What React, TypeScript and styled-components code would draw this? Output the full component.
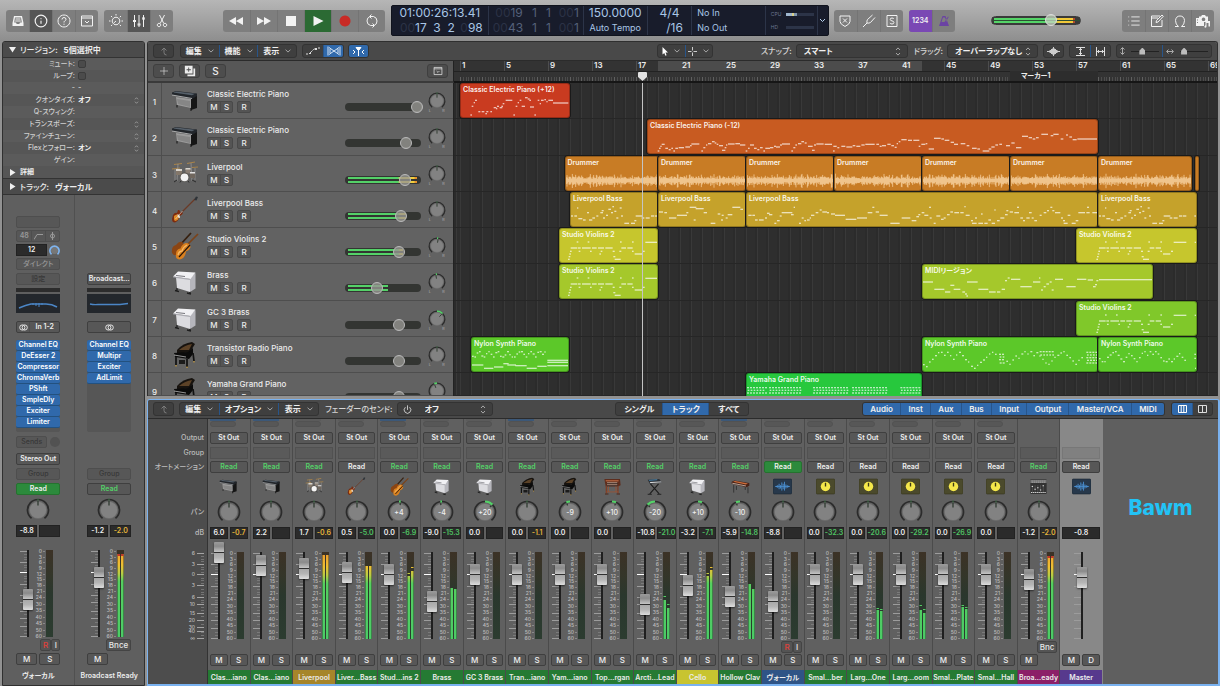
import React from "react";
import styled, { createGlobalStyle, css } from "styled-components";
import { Info, List, Power } from "lucide-react";

const BAR = 11;
const green = "#54d168";
const blue = "#3069ab";

const Global = createGlobalStyle`
  * { box-sizing: border-box; }
  body {
    margin: 0;
    background: #929292;
    color: #ececec;
    font: 500 8px/10px Inter, "Noto Sans CJK JP", sans-serif;
    font-feature-settings: "palt";
  }
  button, input, select { font: inherit; font-feature-settings: inherit; color: inherit; margin: 0; }
  button { padding: 0; border: 0; background: none; cursor: pointer; }
  svg { display: block; flex: none; }
`;

/* ---------- page frame ---------- */

const Page = styled.div`
  display: flex;
  flex-direction: column;
  height: 100vh;
  min-height: 600px;
  overflow: hidden;
`;

const Body = styled.div`
  flex: 1;
  min-height: 0;
  display: grid;
  grid-template-columns: 143px minmax(0, 1fr);
  gap: 2px;
  padding-left: 2px;
`;

const MainColumn = styled.main`
  display: flex;
  flex-direction: column;
  gap: 3px;
  min-width: 0;
  min-height: 0;
`;

const Spacer = styled.div<{ $grow?: number }>`
  flex: ${(p) => p.$grow ?? 1} 1 0;
`;

/* ---------- control bar ---------- */

const ControlBar = styled.header`
  height: 41px;
  flex: none;
  display: flex;
  align-items: center;
  padding: 0 6px;
  background: linear-gradient(#b6b6b6, #8e8e8e);
`;

const BarGroup = styled.div<{ $gap?: number }>`
  display: flex;
  height: 22px;
  margin-left: ${(p) => p.$gap ?? 0}px;
  border-radius: 3px;
  overflow: hidden;
  background: #7e7e7e;
`;

const barTones = { plain: "transparent", on: "#565656", play: "#2b6a33", violet: "#7a48b4" };

const BarButton = styled.button<{ $tone?: keyof typeof barTones; $wide?: boolean }>`
  width: ${(p) => (p.$wide ? 27 : 23)}px;
  display: grid;
  place-items: center;
  color: #f2f2f2;
  background: ${(p) => barTones[p.$tone ?? "plain"]};
  & + & { border-left: 1px solid #747474; }
`;

const Lcd = styled.div`
  display: flex;
  width: 438px;
  height: 31px;
  margin: 0 5px 0 6px;
  border-radius: 2px;
  background: #181c2b;
  border: 1px solid #10131d;
  color: #a9c6e6;
  font-weight: 400;
  overflow: hidden;
`;

const LcdCell = styled.div<{ $w: number; $align?: string }>`
  width: ${(p) => p.$w}px;
  display: flex;
  flex-direction: column;
  justify-content: space-evenly;
  align-items: ${(p) => p.$align ?? "center"};
  padding: 0 5px;
  & + & { border-left: 1px solid #2c3448; }
`;

const LcdBig = styled.div`
  font-size: 12px;
  line-height: 14px;
  white-space: nowrap;
`;

const LcdSmall = styled.div`
  font-size: 9px;
  line-height: 14px;
  white-space: nowrap;
`;

const LcdDigits = styled.div<{ $muted?: boolean }>`
  display: grid;
  grid-template-columns: 30px 14px 14px 28px;
  text-align: right;
  font-size: 12px;
  line-height: 14px;
  color: ${(p) => (p.$muted ? "#55617a" : "inherit")};
  i { font-style: normal; color: #2b3246; }
`;

const LoadRow = styled.div`
  display: flex;
  align-items: center;
  gap: 5px;
  font-size: 5px;
  line-height: 10px;
  color: #6b7890;
  span { width: 10px; }
`;

const LoadTrack = styled.div<{ $filled?: boolean }>`
  width: 28px;
  height: 3px;
  background: ${(p) =>
    p.$filled ? "linear-gradient(90deg, #9fb6ce 0 6px, #d9d08a 6px 8px, #8096ae 8px 11px, #2c3448 11px)" : "#2c3448"};
`;

const MasterVolume = styled.input`
  appearance: none;
  width: 90px;
  height: 13px;
  background: transparent;
  &::-webkit-slider-runnable-track {
    height: 9px;
    border-radius: 5px;
    border: 1px solid #3a3a3a;
    background:
      linear-gradient(#3a3a3a 0 1px, transparent 1px 3px, #2f4f35 3px 4px, transparent 4px 6px, #3a3a3a 6px),
      linear-gradient(90deg, #3a3a3a 0 2px, #55d468 2px 62px, #f1c93a 66px 81px, #b04a2c 81px 83px, #3a3a3a 83px);
  }
  &::-webkit-slider-thumb {
    appearance: none;
    width: 12px;
    height: 12px;
    margin-top: -3px;
    border-radius: 50%;
    background: rgba(200, 215, 195, 0.75);
    border: 1px solid #dcdcdc;
  }
`;

/* ---------- shared panel controls ---------- */

const PanelBar = styled.div`
  display: flex;
  align-items: center;
  flex: none;
  height: 19px;
  padding: 0 5px;
  background: #494949;
  border-bottom: 1px solid #2b2b2b;
`;

const ToolGroup = styled.div<{ $gap?: number; $w?: number }>`
  display: flex;
  flex: none;
  height: 14px;
  width: ${(p) => (p.$w ? `${p.$w}px` : "auto")};
  margin-left: ${(p) => p.$gap ?? 0}px;
  border: 1px solid #333;
  border-radius: 3px;
  overflow: hidden;
  background: #3f3f3f;
`;

const ToolButton = styled.button<{ $w?: number; $on?: boolean }>`
  display: flex;
  flex: ${(p) => (p.$w ? "none" : "1 1 auto")};
  width: ${(p) => (p.$w ? `${p.$w}px` : "auto")};
  align-items: center;
  justify-content: center;
  gap: 6px;
  white-space: nowrap;
  font-weight: 600;
  color: #f0f0f0;
  background: ${(p) => (p.$on ? blue : "transparent")};
  & + & { border-left: 1px solid ${(p) => (p.$on ? "#28558a" : "#393939")}; }
`;

const FieldLabel = styled.label<{ $gap?: number }>`
  margin-left: ${(p) => p.$gap ?? 6}px;
  margin-right: 4px;
  white-space: nowrap;
  color: #d6d6d6;
`;

const SelectBox = styled.div<{ $w: number }>`
  display: grid;
  grid-template-columns: 1fr 12px;
  align-items: center;
  width: ${(p) => p.$w}px;
  height: 100%;
`;

const Select = styled.select`
  appearance: none;
  grid-area: 1 / 1 / 2 / 3;
  height: 12px;
  border: 0;
  padding: 0 14px 0 7px;
  background: transparent;
  font-weight: 600;
  color: #f0f0f0;
`;

const SelectArrows = styled.svg`
  grid-area: 1 / 2;
  pointer-events: none;
`;

const MiniRange = styled.input`
  appearance: none;
  width: 28px;
  height: 10px;
  background: transparent;
  &::-webkit-slider-runnable-track { height: 1px; background: #222; }
  &::-webkit-slider-thumb {
    appearance: none;
    width: 6px;
    height: 7px;
    margin-top: -3px;
    background: #bcbcbc;
    clip-path: polygon(50% 0, 100% 45%, 100% 100%, 0 100%, 0 45%);
  }
`;

const Chevron = () => (
  <svg width="6" height="4" viewBox="0 0 6 4" fill="none" stroke="#a6a6a6"><path d="M.5.6 3 3.100 5.500.6" /></svg>
);

const UpDown = ({ small }: { small?: boolean }) => (
  <SelectArrows width={small ? 5 : 6} height={small ? 7 : 9} viewBox="0 0 6 9" fill="none" stroke="#a8a8a8">
    <path d="M1 3 3 .9 5 3M1 6l2 2.100L5 6" />
  </SelectArrows>
);

const UpArrow = () => (
  <svg width="8" height="9" viewBox="0 0 8 9" fill="none" stroke="#7d7d7d"><path d="M1.500 3.500 4 1l2.500 2.500M4 1v4.500q0 2.500 2.500 2.500" /></svg>
);

/* ---------- instrument pictures ---------- */

const pictures: Record<string, React.ReactNode> = {
  epiano: (
    <>
      <path d="M19 9 26 7v14l-6 2z" fill="#151515" />
      <path d="M5 10 20 12v9L6 18z" fill="#9b9b9b" />
      <path d="M6 12l13 2v6L7 17z" fill="#868686" />
      <path d="M1 5.500 5 4l21 2.500V9l-5 3L1 8z" fill="#22262b" />
      <path d="M2 5.500 5 4.600l19 2.200-3 1.400z" fill="#56606a" />
      <path d="M1 8l20 3.500" stroke="#c9c9c9" strokeWidth=".8" />
      <path d="M6 18v2.500M20 21v3" stroke="#111" />
    </>
  ),
  drums: (
    <>
      <path d="M3 4.500l8-1M16 3.500l8-1.500M1 9l8-1M21 7.500l6-.5" stroke="#a8834a" strokeWidth="1.200" />
      <path d="M7 4 6 21M20 3l1 18M4 9v11M24 8v12" stroke="#a5a5a5" strokeWidth=".6" />
      <path d="M5 10h6v5H5z" fill="#83776a" />
      <path d="M5 9h6v2H5zM14.500 8h5v2h-5z" fill="#d8d4cc" />
      <rect x="14.500" y="9.500" width="5" height="4" fill="#8b8076" />
      <rect x="19" y="13" width="5" height="5" fill="#70675e" />
      <path d="M19 12h5v1.500h-5z" fill="#e2e2e2" />
      <circle cx="13.500" cy="17" r="4.600" fill="#55504a" />
      <circle cx="13.500" cy="17.300" r="3.900" fill="#f4f4f4" />
      <path d="M6 20l-3 2M21 20l4 2M10 21l-1 1.500M17 21l1 1.500" stroke="#2a2a2a" />
    </>
  ),
  bass: (
    <>
      <path d="M10 17 24 3" stroke="#6a3a26" strokeWidth="1.200" />
      <path d="M23 4l2-3.500 2 .5-1.500 3.500z" fill="#2e3338" />
      <path d="M2 19q2-3 4-2l1-3q2-.5 2 1.500 .5 1.500 2.500 1 1 1.500-2 3-1 1-1.500 3-1 3-4 4-3 0-3-3.500z" fill="#7c2c10" />
      <path d="M3 20q2-2 3.500-1.500 1.500 1.500 1.500 3-1 3-3.500 3.500-2-.5-1.500-2.500z" fill="#e08a26" />
      <path d="M6.500 18q3 1 2.500 4l-2-.5z" fill="#e9e2d0" />
      <path d="M4.500 23l7-8" stroke="#e6e6e6" strokeWidth=".6" />
    </>
  ),
  violins: (
    <>
      <path d="M9 13 20 1" stroke="#37200f" strokeWidth="1.800" />
      <path d="M15 14 27 2" stroke="#7a431a" strokeWidth="1.700" />
      <path d="M1 18q0-4 4-5 3-4 6-3 3 2 1 5-1 3-4 4-2 5-5 4-3-2-2-5z" fill="#8b4513" />
      <path d="M5 22q0-5 4.500-5.500 1-4 5-5.500 5 0 5 4.500-1 3-4.500 4-1 7-6 8-5 0-4-5.500z" fill="#d9801f" />
      <path d="M7 23q1-4 4-4 1-4 5-6" stroke="#f6b864" fill="none" strokeWidth="1.300" />
      <path d="M8 25 19 13" stroke="#241308" strokeWidth="1.200" />
    </>
  ),
  synth: (
    <>
      <path d="M6 20v3M19 23v3M8 23.500l-4-1M20 26l-4-1" stroke="#1e1e1e" strokeWidth="1.300" />
      <path d="M19 10 24.500 5v15.500L19 24z" fill="#b6b6bc" />
      <path d="M5 9l14 2v13L6 20z" fill="#dcdce0" />
      <path d="M2 8.500 7 3.500l17.500 1-5 6.500z" fill="#f1f1f4" />
      <path d="M5 7.500l9 1" stroke="#77777d" strokeWidth="1" />
      <path d="M2 9 19 11.500" stroke="#a0a0a7" strokeWidth=".8" />
    </>
  ),
  grand: (
    <>
      <path d="M6 9q6-7 15-8l3 2-5 8-13 2z" fill="#17130f" />
      <path d="M8 9q6-5 13-6l-3 6z" fill="#5c4227" />
      <path d="M3 12l14-1 5-4v6l-4 5-14-2z" fill="#0b0b0b" />
      <path d="M3 14l12 2" stroke="#d0d0d0" strokeWidth=".7" />
      <path d="M5 16v8M16 18v8M22 12l1 8" stroke="#111" strokeWidth="1.700" />
      <path d="M5 24v1.500M16 25.500V27M23 20v1.500" stroke="#c69a3b" strokeWidth="1.200" />
      <path d="M8 19h6v4H8z" fill="#1b1b1b" />
    </>
  ),
  organ: (
    <>
      <path d="M2 3h23l1 9-4 2H4z" fill="#5d2d1d" />
      <path d="M4 4.500h19v2H4z" fill="#a85c3a" />
      <path d="M6 8h15v1.200H6zM6 11h15v1.200H6z" fill="#d8c8b8" />
      <path d="M6 9.700h16M6 12.700h16" stroke="#222" strokeWidth=".8" />
      <path d="M5 13v11M22 13v11" stroke="#7e3e26" strokeWidth="2" />
      <path d="M5 22h18M8 14v8M19 14v8" stroke="#9c5233" strokeWidth="1.200" />
      <path d="M3 25h5M20 25h5" stroke="#4e2416" strokeWidth="1.500" />
    </>
  ),
  stage: (
    <>
      <path d="M8 10 21 25M20 10 7 25" stroke="#1c1c1c" strokeWidth="1.600" />
      <path d="M4 25.500h6M18 25.500h6" stroke="#1c1c1c" strokeWidth="1.300" />
      <path d="M4 4l17-1 4 5-18 2z" fill="#2b3036" />
      <path d="M7 7.500 23.500 6.500l1.200 1.300L8 9z" fill="#e9e9e9" />
      <path d="M6 5l12-1" stroke="#4fa2d8" />
    </>
  ),
  clav: (
    <>
      <path d="M4 12v11M25 15v9M8 13v6M21 13v6" stroke="#2b2b2b" strokeWidth="1.200" />
      <path d="M1 7 5 5l22 4v4l-4 2L1 10z" fill="#4a2216" />
      <path d="M3 7l3-1 19 3.500-3 1.500z" fill="#cf6f3c" />
      <path d="M2 9.200l20 4" stroke="#e8e0d6" strokeWidth="1" />
    </>
  ),
  board: (
    <>
      <rect x="2" y="3" width="24" height="22" rx="1" fill="#333" />
      <path d="M2 4h24v5H2z" fill="#777" />
      <path d="M4 6h20M4 8h20" stroke="#aaa" strokeWidth=".8" strokeDasharray="2 1" />
      <path d="M5 12v10M9 12v10M13 12v10M17 12v10M21 12v10" stroke="#666" strokeWidth=".8" />
      <path d="M4 14h3M8 18h3M12 16h3M16 19h3M20 13h3M3 23h22" stroke="#ddd" strokeWidth="1.500" strokeDasharray="2 1" />
    </>
  ),
  wave: (
    <>
      <rect width="28" height="22" y="3" rx="2" fill="#27384b" stroke="#1d2935" />
      <path d="M3 14h22" stroke="#4c94d8" />
      <path d="M5 13v2M7 12v4M9 10v8M11 12v5M13 8v12M15 10v8M17 7v13M19 11v6M21 12v4M23 13v2" stroke="#4c94d8" strokeWidth="1.300" />
    </>
  ),
  knob: (
    <>
      <rect width="28" height="22" y="3" rx="2" fill="#4b4a2c" stroke="#38371f" />
      <circle cx="14" cy="14" r="7" fill="#f5e84a" />
      <path d="M14 8.500v5.500" stroke="#3d3a16" strokeWidth="2" />
    </>
  ),
};

const Picture = ({ kind, size }: { kind: string; size: number }) => (
  <svg width={size} height={size} viewBox="0 0 28 28" fill="none">{pictures[kind]}</svg>
);

/* ---------- rotary knob ---------- */

const KnobText = styled.text`
  font-size: 7px;
  font-weight: 500;
  fill: #f0f0f0;
  text-anchor: middle;
`;

const TinyText = styled.text`
  font-size: 5px;
  font-weight: 500;
  fill: #a2a2a2;
`;

const Knob = ({ pan = 0, size = 24, label, sides }: { pan?: number; size?: number; label?: string; sides?: boolean }) => {
  const deg = (pan / 64) * 145;
  const at = (a: number, r: number) => [12 + r * Math.sin((a * Math.PI) / 180), 12 - r * Math.cos((a * Math.PI) / 180)];
  const arc = (a: number, b: number) => `M${at(a, 10.500)} A10.500 10.500 0 ${b - a > 180 ? 1 : 0} 1 ${at(b, 10.500)}`;
  const from = pan ? Math.min(0, deg) : -2;
  const to = pan ? Math.max(0, deg) : 2;
  return (
    <svg width={size} height={size} viewBox="0 0 24 24" overflow="visible" role="img" aria-label={`pan ${pan}`}>
      <path d={arc(-142, 142)} fill="none" stroke="#2b2b2b" strokeWidth="1.700" />
      <path d={arc(from, to)} fill="none" stroke={pan ? green : "#3f8a4c"} strokeWidth="2.200" />
      <circle cx="12" cy="12" r="8.600" fill="#828282" stroke="#6c6c6c" strokeWidth=".6" />
      <path d={`M${at(deg, label ? 7 : 4.500)} L${at(deg, 9)}`} stroke="#2f3a30" strokeWidth="1.300" />
      {label && <KnobText x="12" y="15">{label}</KnobText>}
      {sides && (
        <>
          <TinyText x="1" y="27">L</TinyText>
          <TinyText x="19" y="27">R</TinyText>
        </>
      )}
    </svg>
  );
};

/* ---------- inspector ---------- */

const Inspector = styled.aside`
  display: flex;
  flex-direction: column;
  border: 1px solid #303030;
  border-radius: 3px 3px 0 0;
  background: #5f5f5f;
  overflow: hidden;
`;

const InspectorHead = styled.h2<{ $top?: boolean }>`
  display: flex;
  align-items: center;
  gap: 4px;
  height: 18px;
  margin: 0;
  padding-left: 6px;
  font-size: 8px;
  font-weight: 500;
  white-space: nowrap;
  background: #4b4b4b;
  border-bottom: 1px solid #333;
  ${(p) => p.$top && css`border-top: 1px solid #333;`}
  b { font-weight: 700; margin-left: 2px; }
`;

const ParamRow = styled.div`
  display: grid;
  grid-template-columns: 72px 1fr 10px;
  column-gap: 3px;
  align-items: center;
  height: 12px;
  font-size: 7px;
  background: #565656;
  color: #cfcfcf;
  &:nth-child(odd) { background: #5b5b5b; }
  label, span { text-align: right; white-space: nowrap; }
  b { font-weight: 700; color: #f4f4f4; }
  svg { grid-area: 1 / 3; }
`;

const Tick = styled.input`
  appearance: none;
  width: 8px;
  height: 8px;
  border: 1px solid #3c3c3c;
  border-radius: 2px;
  background: #4b4b4b;
`;

const Disclosure = styled.div`
  display: flex;
  align-items: center;
  gap: 4px;
  height: 12px;
  padding-left: 6px;
  font-size: 7px;
  font-weight: 600;
  background: #565656;
`;

const InspectorStrips = styled.div`
  flex: 1;
  display: grid;
  grid-template-columns: 1fr 1fr;
`;

const InspectorStrip = styled.section`
  display: grid;
  grid-template-columns: 44px;
  justify-content: center;
  align-content: start;
  align-items: center;
  grid-template-rows: 20px repeat(4, 14px) 15px 7px 21px 26px 92px 20px 14px 15px 15px 28px 14px 113px 15px 19px;
  & + & { border-left: 1px solid #505050; }
`;

const Slot = styled.button<{ $tone?: string }>`
  display: flex;
  align-items: center;
  justify-content: center;
  width: 100%;
  height: 12px;
  border: 1px solid #3f3f3f;
  border-radius: 2px;
  font-size: 7px;
  font-weight: 600;
  white-space: nowrap;
  color: #eee;
  background: #575757;
  ${(p) => p.$tone === "green" && css`color: ${green};`}
  ${(p) => p.$tone === "solid" && css`background: #2c8a3c; border-color: #25722f;`}
  ${(p) => p.$tone === "dim" && css`color: #383838; border-color: #4e4e4e; font-weight: 500;`}
  ${(p) => p.$tone === "soft" && css`color: #999; border-color: #4e4e4e; font-weight: 500;`}
`;

const SlotPair = styled.div<{ $cols: string; $soft?: boolean }>`
  display: grid;
  grid-template-columns: ${(p) => p.$cols};
  align-items: center;
  justify-items: center;
  height: 12px;
  border: 1px solid ${(p) => (p.$soft ? "#4e4e4e" : "#3f3f3f")};
  border-radius: 2px;
  font-size: 7px;
  font-weight: 600;
  background: #575757;
  color: ${(p) => (p.$soft ? "#999" : "#eee")};
  > * + * { border-left: 1px solid #4e4e4e; }
`;

const PairCell = styled.span`
  display: grid;
  place-items: center;
  width: 100%;
  height: 10px;
`;

const GainRow = styled.div`
  display: grid;
  grid-template-columns: 31px 11px;
  justify-content: space-between;
  align-items: center;
`;

const Readout = styled.output<{ $tone?: string }>`
  height: 12px;
  border: 1px solid #222;
  background: #2b2b2b;
  text-align: center;
  font-size: 7px;
  font-weight: 600;
  color: ${(p) => (p.$tone === "y" ? "#e6b53a" : p.$tone === "g" ? "#4fc464" : "#f0f0f0")};
`;

const GainMeter = styled.div`
  height: 4px;
  background: #2c2c2c;
`;

const EqView = styled.svg`
  width: 44px;
  height: 19px;
  background: #23272c;
`;

const Inserts = styled.div`
  height: 92px;
  border-radius: 2px;
  background: #565656;
`;

const Insert = styled.button`
  display: block;
  width: 100%;
  height: 11px;
  border-radius: 2px;
  border-bottom: 1px solid #23517f;
  background: ${blue};
  color: #fff;
  font-size: 7px;
  font-weight: 600;
  line-height: 10px;
`;

const SendRow = styled.div`
  display: grid;
  grid-template-columns: 31px 10px;
  justify-content: space-between;
  align-items: center;
  i { height: 10px; border-radius: 50%; background: #525252; }
`;

const Center = styled.div`
  display: grid;
  place-items: center;
`;

const StripName = styled.h3`
  margin: 0;
  justify-self: center;
  font-size: 7px;
  font-weight: 600;
  white-space: nowrap;
`;

/* ---------- fader and meter ---------- */

const FaderBox = styled.div`
  display: grid;
  grid-template-columns: 100%;
  height: 113px;
  justify-items: center;
`;

const Scale = styled.svg`
  grid-area: 1 / 1;
`;

const FaderHold = styled.div<{ $alone?: boolean }>`
  grid-area: 1 / 1;
  width: 36px;
  padding: 2px 0 0 ${(p) => (p.$alone ? 14 : 3)}px;
`;

const Fader = styled.input`
  appearance: none;
  display: block;
  writing-mode: vertical-lr;
  direction: rtl;
  width: 10px;
  height: 108px;
  background: transparent;
  &::-webkit-slider-runnable-track { width: 10px; background: transparent; }
  &::-webkit-slider-thumb {
    appearance: none;
    width: 10px;
    height: 21px;
    border-radius: 1px;
    background: linear-gradient(#9b9b9b, #8a8a8a 20%, #c4c4c4 47%, #2f2f2f 47% 53%, #a9a9a9 53%, #b5b5b5 75%, #dedede);
    box-shadow: 0 1px 2px rgba(0, 0, 0, 0.55);
  }
`;

const SmallKeys = styled.div`
  grid-area: 1 / 1;
  align-self: end;
  justify-self: end;
  display: flex;
`;

const SmallKey = styled.button<{ $rec?: boolean }>`
  min-width: 9px;
  height: 12px;
  padding: 0 2px;
  border: 1px solid #444;
  border-radius: 2px;
  background: #545454;
  font-size: 8px;
  color: ${(p) => (p.$rec ? "#e0403a" : "#e6e6e6")};
`;

const MuteRow = styled.div`
  display: grid;
  grid-template-columns: 1fr 1fr;
  gap: 2px;
`;

const MuteKey = styled.button`
  height: 12px;
  border: 1px solid #3f3f3f;
  border-radius: 2px;
  background: #575757;
  color: #efefef;
  line-height: 10px;
`;

const ScaleText = styled.text`
  font-size: 5px;
  font-weight: 500;
  fill: #bdbdbd;
  text-anchor: end;
`;

const meterMarks: [string, number][] = [
  ["0", 0], ["3", 6], ["6", 11], ["9", 17], ["12", 23], ["15", 28], ["18", 34], ["21", 40],
  ["24", 46], ["30", 53], ["35", 59], ["40", 66], ["45", 72], ["50", 79], ["60", 85],
];
const majors = [0, 11, 33, 44, 51, 60, 67, 75, 85];
const minors = [3, 6, 8, 14, 16, 19, 25, 27, 30, 36, 39, 41, 47, 49, 54, 57, 63, 71, 79, 82];

type Level = { top: [number, number]; peak?: [number, number]; hot?: boolean };

const FaderUnit = ({ value, name, level, alone }: { value: number; name: string; level?: Level; alone?: boolean }) => {
  const x = alone ? 11 : 0;
  return (
    <>
      <Scale width="36" height="113" viewBox="0 0 36 113" aria-hidden="true">
        <defs>
          <linearGradient id="meterBed" x1="0" y1="12" x2="0" y2="99" gradientUnits="userSpaceOnUse">
            <stop offset="0" stopColor="#3c3226" />
            <stop offset=".3" stopColor="#33362a" />
            <stop offset=".5" stopColor="#2a372d" />
            <stop offset="1" stopColor="#2c3c30" />
          </linearGradient>
          <linearGradient id="meterFill" x1="0" y1="12" x2="0" y2="99" gradientUnits="userSpaceOnUse">
            <stop offset="0" stopColor="#ee9a2e" />
            <stop offset=".17" stopColor="#eebf33" />
            <stop offset=".27" stopColor="#b8cc45" />
            <stop offset=".36" stopColor="#55cf60" />
            <stop offset="1" stopColor="#4ccb66" />
          </linearGradient>
        </defs>
        {majors.map((y) => <path key={y} d={`M${x} ${y + 13.500}h7`} stroke="#9c9c9c" />)}
        {minors.map((y) => <path key={y} d={`M${x + 4} ${y + 13.500}h3`} stroke="#858585" strokeWidth=".7" />)}
        <path d={`M${x} 34.500h7`} stroke="#fff" />
        <rect x={x + 7} y="12" width="2" height="87" fill="#1f1f1f" />
        {!alone && (
          <>
            {meterMarks.map(([t, y]) => (
              <g key={t}>
                <ScaleText x="22" y={y + 15}>{t}</ScaleText>
                <path d={`M23 ${y + 13.500}h2`} stroke="#9c9c9c" strokeWidth=".7" />
              </g>
            ))}
            <rect x="26" y="12" width="7" height="87" fill="url(#meterBed)" />
            {level?.top.map((t, i) => (
              <g key={i}>
                <rect x={26.500 + i * 3.500} y={t + 12} width="2.500" height={87 - t} fill="url(#meterFill)" />
                {level.hot && <rect x={26.500 + i * 3.500} y={t + 12} width="2.500" height="2" fill="#c0392b" />}
                {level.peak && <rect x={26.500 + i * 3.500} y={level.peak[i] + 12} width="2.500" height="1" fill="url(#meterFill)" />}
              </g>
            ))}
          </>
        )}
      </Scale>
      <FaderHold $alone={alone}>
        <Fader type="range" min={0} max={87} defaultValue={value} aria-label={`${name} volume`} />
      </FaderHold>
    </>
  );
};

/* ---------- arrange area ---------- */

const Arrange = styled.section`
  flex: 1;
  min-height: 0;
  margin: 0 2px 0 0;
  display: flex;
  flex-direction: column;
  border: 1px solid #2f2f2f;
  border-bottom: 0;
  border-radius: 3px 3px 0 0;
  overflow: hidden;
`;

const ArrangeBody = styled.div`
  flex: 1;
  min-height: 0;
  display: grid;
  grid-template-columns: 306px minmax(0, 1fr);
  grid-template-rows: 22px minmax(0, 1fr);
`;

const ListHead = styled.div`
  display: flex;
  align-items: center;
  gap: 5px;
  padding: 0 5px;
  background: #575757;
  border-bottom: 2px solid #3a3a3a;
  border-right: 1px solid #222;
`;

const HeadButton = styled.button`
  display: grid;
  place-items: center;
  width: 21px;
  height: 14px;
  border: 1px solid #3f3f3f;
  border-radius: 3px;
  background: #4d4d4d;
  font-size: 10px;
`;

const rowsTemplate = css`
  display: grid;
  grid-template-rows: repeat(8, minmax(0, 1fr)) 23px;
  overflow: hidden;
`;

const TrackList = styled.div`
  ${rowsTemplate}
  background: #626262;
  border-right: 1px solid #222;
`;

const TrackRow = styled.div`
  display: grid;
  grid-template-columns: 14px 45px 138px 78px 1fr;
  min-height: 0;
  overflow: hidden;
  border-bottom: 1px solid #4e4e4e;
`;

const TrackNumber = styled.div`
  padding-top: 14px;
  text-align: center;
  border-right: 1px solid #4e4e4e;
`;

const TrackPicture = styled.div`
  display: grid;
  justify-content: center;
  align-content: start;
  padding-top: 4px;
`;

const TrackInfo = styled.div`
  padding-top: 6px;
  white-space: nowrap;
`;

const Keys = styled.div`
  display: flex;
  gap: 4px;
  margin-top: 2px;
`;

const KeyGroup = styled.div`
  display: flex;
  height: 12px;
  border: 1px solid #494949;
  border-radius: 2px;
  background: #545454;
  overflow: hidden;
`;

const Key = styled.button`
  width: 12px;
  line-height: 10px;
  & + & { border-left: 1px solid #4a4a4a; }
`;

const VolumeBox = styled.div`
  display: grid;
  align-content: start;
  align-items: center;
  padding-top: 18px;
`;

const VolumeBed = styled.div`
  grid-area: 1 / 1;
  width: 76px;
  height: 8px;
  padding: 1px 3px;
  border-radius: 4px;
  background: #333532;
  display: grid;
  gap: 2px;
  grid-template-rows: 2px 2px;
`;

const VolumeLevel = styled.i<{ $w: number }>`
  width: ${(p) => p.$w}px;
  background: linear-gradient(90deg, ${green} 50px, #f0cf3c 52px 66px, #e58f2c 67px);
`;

const Volume = styled.input`
  grid-area: 1 / 1;
  appearance: none;
  width: 78px;
  height: 12px;
  background: transparent;
  &::-webkit-slider-thumb {
    appearance: none;
    width: 12px;
    height: 12px;
    border-radius: 50%;
    border: 1px solid #b9b9b9;
    background: rgba(150, 150, 145, 0.8);
  }
`;

const PanBox = styled.div`
  padding: 9px 0 0 5px;
`;

const Ruler = styled.div`
  position: relative;
  display: grid;
  grid-template-rows: 11px 11px;
  overflow: hidden;
  background: #333;
  border-bottom: 2px solid #161616;
`;

const Numbers = styled.div`
  display: flex;
  padding-left: 6px;
  border-bottom: 1px solid #222;
  overflow: hidden;
  background: linear-gradient(90deg, transparent 204px, #4c4c4c 204px 468px, transparent 468px);
`;

const RulerNumber = styled.span`
  flex: none;
  width: ${BAR * 4}px;
  padding-left: 1px;
  border-left: 1px solid #4d4d4d;
  font-weight: 600;
  line-height: 9px;
`;

const Ticks = styled.div`
  margin-left: 6px;
  background:
    linear-gradient(#333 0 5px, transparent 5px),
    repeating-linear-gradient(90deg, #606060 0 1px, transparent 1px 3px, #4c4c4c 3px 4px, transparent 4px 6px, #4c4c4c 6px 7px, transparent 7px 8px, #4c4c4c 8px 9px, transparent 9px 11px);
`;

const Marker = styled.div`
  position: absolute;
  top: 10px;
  height: 11px;
  padding-left: 11px;
  font-size: 7px;
  font-weight: 700;
  background: #2d2d2d;
`;

const Lanes = styled.div`
  ${rowsTemplate}
  position: relative;
  background: repeating-linear-gradient(90deg, #393939 0 1px, #2e2e2e 1px 9px, #2b2b2b 9px 11px) 6px 0, #2d2d2d;
`;

const Lane = styled.div`
  position: relative;
  min-height: 0;
  border-bottom: 1px solid #262626;
`;

const RegionBox = styled.div<{ $color: string }>`
  position: absolute;
  top: 0;
  height: 35px;
  overflow: hidden;
  border-radius: 3px;
  background: ${(p) => p.$color};
  border: 1px solid rgba(0, 0, 0, 0.25);
  box-shadow: 0 0 0 1px #1a1a1a;
  display: grid;
`;

const RegionName = styled.span`
  grid-area: 1 / 1;
  padding: 0 2px;
  font-size: 7px;
  font-weight: 600;
  line-height: 11px;
  color: rgba(255, 255, 255, 0.92);
  white-space: nowrap;
`;

const Notes = styled.svg`
  grid-area: 1 / 1;
`;

const Playhead = styled.div`
  position: absolute;
  top: 0;
  bottom: 0;
  width: 1px;
  background: #c4c4c4;
`;

const PlayheadCap = styled.svg`
  position: absolute;
  top: 11px;
`;

type Tri = [number, number, number];
const parse = (s: string): Tri[] => s.split(",").map((n) => n.trim().split(" ").map(Number) as Tri);
const shift = (list: Tri[], dx: number): Tri[] => list.map(([x, y, w]) => [x + dx, y, w]);

const random = (seed: number) => {
  let s = seed;
  return () => ((s = (s * 16807) % 2147483647) % 1000) / 1000;
};

const scatter = (seed: number, from: number, to: number, low: number, high: number, step = 7): Tri[] => {
  const r = random(seed);
  const out: Tri[] = [];
  let y = (low + high) / 2;
  let dir = 1;
  for (let x = from; x < to; x += step) {
    y += dir * (6 + r() * 8);
    if (y > high) { y = high; dir = -1; }
    if (y < low) { y = low; dir = 1; }
    if (r() > 0.85) dir = -dir;
    out.push([x, Math.round(y), 4 + Math.round(r() * 2)]);
  }
  return out;
};

const rows = (ys: number[], spans: [number, number][]): Tri[] =>
  ys.flatMap((y, k) => spans.flatMap(([a, b]) => {
    const out: Tri[] = [];
    for (let x = a + (k % 2) * 2; x < b; x += 9) out.push([x, y, k === 1 ? 5 : 6]);
    return out;
  }));

const piano = parse("28 94 5,32 68 5,38 57 4,42 50 6,52 84 6,62 84 8,73 90 5,76 84 6,88 84 5,98 72 8,108 68 6,105 75 4,116 72 8,125 60 5,121 68 5,134 50 20,157 94 5,164 68 5,170 57 4,176 50 5,182 68 10,192 42 8,200 46 6,205 50 5,207 70 12,220 94 5,230 50 5,236 60 4,240 50 8,250 48 5,256 54 4,262 50 14,276 58 46");
const pianoLong = parse("29 94 5,33 86 5,37 80 4,41 74 9,52 86 8,62 90 6,70 86 5,76 94 5,82 86 8,92 84 16,112 82 14,126 78 5,130 73 24,160 94 5,166 84 6,174 76 4,180 72 10,192 66 8,200 70 5,206 74 5,213 78 12,222 92 10,230 84 5,234 76 4,240 73 20,262 72 14,276 76 16,293 94 5,300 86 5,306 76 12,318 86 8,328 90 6,336 84 8,346 94 5,352 86 14,366 84 10,378 80 6,384 82 12,396 76 6,402 73 24,430 94 5,436 84 6,442 76 5,450 72 10,460 66 8,470 70 6,480 80 14,492 92 8,498 76 6,505 73 22,530 74 22,555 94 5,556 80 10,568 84 6,580 80 12,595 82 18,614 78 8,625 80 12,640 76 10,652 74 28,685 74 8,695 80 6,702 78 12,718 74 10,730 78 8,740 83 6,746 72 4,752 66 5,760 60 16,780 62 12,796 62 18,812 80 5,820 74 12,833 72 5,842 88 16,858 56 20,880 58 8,890 62 14,908 68 10,918 74 12,938 72 14,956 78 8,972 86 14,988 88 8,1004 94 20,1022 88 8,1030 82 10,1042 76 8,1054 74 8,1074 78 12,1090 70 10,1104 84 16,1122 50 18,1142 54 10,1154 58 8,1164 54 8,1180 44 20,1208 48 8,1216 44 16,1238 58 8,1254 46 6,1264 52 8,1274 60 12,1288 58 62");
const bassA = parse("0 70 6,10 70 8,18 46 4,22 78 12,36 82 8,48 60 6,54 82 10,64 76 8,76 70 6,88 60 8,92 54 6,96 76 6,105 68 6,112 50 8,120 60 6,124 42 5,130 56 6,136 76 6,146 46 6,150 70 6,160 92 14,180 92 12,190 84 6,194 70 20,212 76 8,224 76 12,240 70 10,252 70 10");
const bassB = parse("0 58 12,16 60 8,30 76 22,54 68 30,82 60 6,92 44 20,110 48 24,104 82 6,134 60 10,155 92 14,176 64 8,188 68 6,186 82 6,200 76 6,206 66 14,220 44 24,244 50 8");
const bassC = parse("4 68 10,16 68 8,24 82 8,36 82 14,54 76 6,60 62 8,66 66 10,82 92 6,90 84 8,98 70 6,104 60 10,114 60 22,132 66 8,140 44 4,156 92 6,164 76 6,172 84 5,180 82 8,188 76 4,192 68 10,206 60 8,218 52 6,226 58 14,240 60 6,252 64 12,264 68 30,296 80 32,330 76 30,362 60 14,376 44 6,386 58 10,398 68 24,430 92 28,464 76 26,494 84 14,508 72 8,514 66 6,524 60 8,532 68 12,546 44 6,548 76 6,560 92 6,568 70 12,582 80 8,590 76 6,600 66 8,610 58 8,622 60 14,640 60 10,652 42 4,656 68 12,675 92 14,672 84 6,684 76 6,694 92 14,702 64 5,712 92 10,724 82 8,734 92 10,742 52 4,750 84 8,760 76 12,774 66 8,778 54 6,788 58 10,802 60 14,810 44 6,820 76 8,828 84 6,838 76 10,846 60 8,854 76 6,862 84 8,878 68 6,890 60 8,900 54 6,910 44 6,916 54 6,924 60 16,942 76 6,950 92 12,948 84 6,962 68 8,974 92 12,986 84 8,994 60 20,1020 44 6,1018 60 10,1036 60 18");
const violins = parse("24 92 5,26 84 5,28 76 5,30 68 5,32 58 20,50 40 5,54 58 8,56 68 5,66 58 26,83 40 5,90 68 5,96 58 14,114 58 18,118 76 5,122 68 5,136 58 22,158 68 6,160 84 6,164 92 18,180 40 5,178 68 6,184 58 14,202 58 16,216 40 5,216 68 5,224 76 22,248 68 6,256 41 38");
const midi = parse("0 52 30,34 74 30,66 82 16,82 62 12,92 74 20,118 82 8,126 88 6,130 94 5,132 52 32,166 74 30,198 82 20,222 82 10,236 74 10,246 48 6,254 40 6,264 44 28,292 66 34,330 52 22,348 40 4,354 76 6,362 66 6,370 58 8,380 52 6,386 76 6,396 44 24,430 66 28,462 44 28,494 46 16,510 66 8,516 60 6,520 48 6,528 45 165");
const nylonLow = parse("0 82 34,36 92 28,66 88 28,94 78 16,106 82 26,130 84 34,164 92 30,196 86 28,226 68 62,226 74 62,226 84 62");

type Region = { from: number; to: number; name?: string; notes?: Tri[]; wave?: number };

const lanes: { color: string; regions: Region[] }[] = [
  { color: "#c93b20", regions: [{ from: 0, to: 10, name: "Classic Electric Piano (+12)", notes: piano }] },
  { color: "#c85b21", regions: [{ from: 17, to: 58, name: "Classic Electric Piano (-12)", notes: pianoLong }] },
  {
    color: "#c87c25",
    regions: [
      { from: 9.5, to: 18, name: "Drummer", wave: 3 }, { from: 18, to: 26, name: "Drummer", wave: 17 },
      { from: 26, to: 34, name: "Drummer", wave: 29 }, { from: 34, to: 42, name: "Drummer", wave: 41 },
      { from: 42, to: 50, name: "Drummer", wave: 57 }, { from: 50, to: 58, name: "Drummer", wave: 63 },
      { from: 58, to: 66.5, name: "Drummer", wave: 71 }, { from: 66.8, to: 67.2 },
    ],
  },
  {
    color: "#c5a22b",
    regions: [
      { from: 10, to: 18, name: "Liverpool Bass", notes: bassA }, { from: 18, to: 26, name: "Liverpool Bass", notes: bassB },
      { from: 26, to: 58, name: "Liverpool Bass", notes: bassC },
      { from: 58, to: 67, name: "Liverpool Bass", notes: [...bassA, [286, 70, 8]] },
    ],
  },
  {
    color: "#c6c62d",
    regions: [
      { from: 9, to: 18, name: "Studio Violins 2", notes: violins },
      { from: 56, to: 67, name: "Studio Violins 2", notes: [...shift(violins, 34), [353, 41, 8]] },
    ],
  },
  {
    color: "#a5c82b",
    regions: [
      { from: 9, to: 18, name: "Studio Violins 2", notes: violins },
      { from: 42, to: 63, name: "MIDIリージョン", notes: midi },
    ],
  },
  { color: "#80c82a", regions: [{ from: 56, to: 67, name: "Studio Violins 2", notes: [...shift(violins, 34), [353, 41, 8]] }] },
  {
    color: "#5cc829",
    regions: [
      { from: 1, to: 9.9, name: "Nylon Synth Piano", notes: [...scatter(5, 0, 222, 42, 58, 7), ...nylonLow] },
      {
        from: 42, to: 58, name: "Nylon Synth Piano",
        notes: [...scatter(11, 0, 225, 44, 92, 9), ...rows([50, 58, 66, 76], [[228, 244]]), ...scatter(23, 250, 480, 42, 80, 9), ...rows([44, 52, 60, 68, 76], [[490, 524]]), ...rows([42, 52], [[350, 395]])],
      },
      { from: 58, to: 67, name: "Nylon Synth Piano", notes: [...scatter(31, 0, 262, 42, 72, 8), [286, 50, 8], [286, 62, 8], [288, 92, 8]] },
    ],
  },
  { color: "#27c83d", regions: [{ from: 26, to: 42, name: "Yamaha Grand Piano", notes: rows([42, 50, 58], [[0, 56], [66, 160], [198, 300], [315, 420], [460, 520]]) }] },
];

const wavePath = (seed: number, width: number) => {
  const r = random(seed * 977);
  let d = "";
  for (let x = 0; x < width * 3; x += 2) {
    const beat = x % 18 < 4 ? 16 : x % 9 < 3 ? 13 : 8;
    const a = 4 + r() * beat;
    d += `M${x + 1} ${(70 - a).toFixed(1)}V${(70 + a * 1.200).toFixed(1)}`;
  }
  return d;
};

const RegionView = ({ region, color }: { region: Region; color: string }) => {
  const width = Math.round((region.to - region.from) * BAR);
  return (
    <RegionBox $color={color} style={{ left: 6 + region.from * BAR, width }}>
      <Notes width={width} height="34" viewBox={`0 0 ${width * 3} 102`}>
        {region.notes?.map(([x, y, w], i) => <rect key={i} x={x} y={y - 3} width={w} height="4" fill="#fff" opacity=".68" />)}
        {region.wave && <path d={wavePath(region.wave, width)} stroke="#ffe0b4" strokeWidth="2" />}
      </Notes>
      {region.name && <RegionName>{region.name}</RegionName>}
    </RegionBox>
  );
};

/* ---------- mixer ---------- */

const Mixer = styled.section`
  flex: none;
  border: solid #7ab2f0;
  border-width: 1px 2px 2px 1px;
  border-radius: 3px 3px 0 0;
  overflow: hidden;
  background: #5f5f5f;
`;

const MixerBody = styled.div`
  display: grid;
  grid-template-columns: 60px minmax(0, 895fr) minmax(0, 115fr);
`;

const stripRows = css`
  display: grid;
  grid-template-rows: 12px 14px 15px 14px 24px 28px 14px 113px 14px 3px 14px;
  align-items: center;
`;

const Labels = styled.div`
  ${stripRows}
  justify-items: end;
  padding-right: 3px;
  font-size: 7px;
  white-space: nowrap;
  background: #4d4d4d;
  border-right: 1px solid #333;
  color: #bdbdbd;
`;

const Strips = styled.div`
  display: grid;
  grid-template-columns: repeat(21, minmax(0, 1fr));
`;

const Strip = styled.section<{ $master?: boolean }>`
  ${stripRows}
  grid-template-columns: minmax(0, 1fr);
  background: ${(p) => (p.$master ? "#888" : "#606060")};
  border-right: 1px solid ${(p) => (p.$master ? "#888" : "#4b4b4b")};
`;

const StripCell = styled.div`
  padding: 0 2px;
`;

const SendPill = styled.div<{ $mark?: boolean }>`
  justify-self: start;
  align-self: start;
  width: 26px;
  height: 8px;
  margin-left: 2px;
  border-top: 2px solid ${(p) => (p.$mark ? "#3c5878" : "#5b5b5b")};
  i { display: block; height: 6px; border: 1px solid #525252; border-radius: 3px; background: #575757; }
`;

const GroupSlot = styled.div<{ $master?: boolean }>`
  height: 12px;
  border: 1px solid ${(p) => (p.$master ? "#777" : "#515151")};
  background: ${(p) => (p.$master ? "#808080" : "#5a5a5a")};
`;

const DbPair = styled.div<{ $single?: boolean }>`
  display: grid;
  grid-template-columns: ${(p) => (p.$single ? "1fr" : "1fr 1fr")};
  gap: 2px;
`;

const StripTitle = styled.h3<{ $color: string }>`
  grid-row: 11;
  margin: 0;
  height: 14px;
  text-align: center;
  font-size: 7px;
  font-weight: 600;
  line-height: 15px;
  white-space: nowrap;
  background: ${(p) => p.$color};
`;

const Signature = styled.div`
  padding-top: 77px;
  font-size: 21px;
  line-height: 24px;
  font-weight: 800;
  color: #22c3f6;
  text-align: center;
`;

type Channel = {
  name: string; kind: string; fader: number; db: string; peak?: string; tone?: string;
  pan?: number; read?: string; color?: string; level?: Level; mark?: boolean; extra?: "rec" | "bounce" | "master";
};

const G = "#257a33";
const channels: Channel[] = [
  { name: "Clas…iano", kind: "epiano", fader: 87, db: "6.0", peak: "-0.7", tone: "y", mark: true },
  { name: "Clas…iano", kind: "epiano", fader: 74, db: "2.2", mark: true },
  { name: "Liverpool", kind: "drums", fader: 71, db: "1.7", peak: "-0.6", tone: "y", color: "#a6852a", level: { top: [3, 3] } },
  { name: "Liver…Bass", kind: "bass", fader: 67, db: "0.5", peak: "-5.0", tone: "g", read: "plain", level: { top: [14, 14] } },
  { name: "Stud…ins 2", kind: "violins", fader: 65, db: "0.0", peak: "-6.9", tone: "g", pan: 4, mark: true, level: { top: [24, 19], peak: [21, 15] } },
  { name: "Brass", kind: "synth", fader: 38, db: "-9.0", peak: "-15.3", tone: "g", pan: -4, level: { top: [36, 37] } },
  { name: "GC 3 Brass", kind: "synth", fader: 65, db: "0.0", pan: 20 },
  { name: "Tran…iano", kind: "grand", fader: 65, db: "0.0", peak: "-1.1", tone: "y", mark: true },
  { name: "Yam…iano", kind: "grand", fader: 65, db: "0.0", pan: -9 },
  { name: "Top…rgan", kind: "organ", fader: 65, db: "0.0", pan: 10 },
  { name: "Arcti…Lead", kind: "stage", fader: 35, db: "-10.8", peak: "-21.0", tone: "g", pan: -20, level: { top: [48, 56], peak: [44, 52] } },
  { name: "Cello", kind: "synth", fader: 54, db: "-3.2", peak: "-7.1", tone: "g", pan: 10, color: "#c8c430", level: { top: [24, 18], peak: [21, 15] } },
  { name: "Hollow Clav", kind: "clav", fader: 43, db: "-5.9", peak: "-14.8", tone: "g", pan: -10, mark: true, level: { top: [32, 37] } },
  { name: "ヴォーカル", kind: "wave", fader: 38, db: "-8.8", read: "solid", color: "#2f5486", extra: "rec" },
  { name: "Smal…ber", kind: "knob", fader: 65, db: "0.0", peak: "-32.3", tone: "g", read: "plain" },
  { name: "Larg…One", kind: "knob", fader: 65, db: "0.0", peak: "-20.6", tone: "g", read: "plain", level: { top: [58, 59], peak: [56, 57] } },
  { name: "Larg…oom", kind: "knob", fader: 65, db: "0.0", peak: "-29.2", tone: "g", read: "plain", level: { top: [58, 61], peak: [53, 57] } },
  { name: "Smal…Plate", kind: "knob", fader: 65, db: "0.0", peak: "-26.9", tone: "g", read: "plain", level: { top: [55, 57], peak: [53, 55] } },
  { name: "Smal…Hall", kind: "knob", fader: 65, db: "0.0", read: "plain" },
  { name: "Broa…eady", kind: "board", fader: 60, db: "-1.2", peak: "-2.0", tone: "y", color: "#8c1f68", extra: "bounce", level: { top: [4, 4], hot: true } },
  { name: "Master", kind: "wave", fader: 62, db: "-0.8", read: "plain", color: "#57398d", extra: "master" },
];

const ChannelStrip = ({ c }: { c: Channel }) => {
  const master = c.extra === "master";
  const routed = !master && c.extra !== "bounce";
  return (
    <Strip $master={master}>
      {routed ? <SendPill $mark={c.mark}><i /></SendPill> : <span />}
      <StripCell>{routed && <Slot>St Out</Slot>}</StripCell>
      <StripCell><GroupSlot $master={master} /></StripCell>
      <StripCell><Slot $tone={c.read ?? "green"}>Read</Slot></StripCell>
      <Center><Picture kind={c.kind} size={19} /></Center>
      <Center>{!master && <Knob pan={c.pan} label={c.pan ? `${c.pan > 0 ? "+" : ""}${c.pan}` : undefined} />}</Center>
      <StripCell>
        <DbPair $single={master}>
          <Readout>{c.db}</Readout>
          {!master && <Readout $tone={c.tone}>{c.peak}</Readout>}
        </DbPair>
      </StripCell>
      <StripCell>
        <FaderBox>
          <FaderUnit value={c.fader} name={c.name} level={c.level} alone={master} />
          {c.extra === "rec" && <SmallKeys><SmallKey $rec>R</SmallKey><SmallKey>I</SmallKey></SmallKeys>}
          {c.extra === "bounce" && <SmallKeys><SmallKey>Bnc</SmallKey></SmallKeys>}
        </FaderBox>
      </StripCell>
      <StripCell>
        <MuteRow>
          <MuteKey>M</MuteKey>
          {c.extra !== "bounce" && <MuteKey>{master ? "D" : "S"}</MuteKey>}
        </MuteRow>
      </StripCell>
      <StripTitle $color={c.color ?? G}>{c.name}</StripTitle>
    </Strip>
  );
};

const tracks = [
  { name: "Classic Electric Piano", kind: "epiano", vol: 66 },
  { name: "Classic Electric Piano", kind: "epiano", vol: 55 },
  { name: "Liverpool", kind: "drums", vol: 54, level: 69, noRec: true },
  { name: "Liverpool Bass", kind: "bass", vol: 50, level: 58 },
  { name: "Studio Violins 2", kind: "violins", vol: 48, level: 55, pan: 4 },
  { name: "Brass", kind: "synth", vol: 26, level: 40, pan: -4 },
  { name: "GC 3 Brass", kind: "synth", vol: 48, pan: 20 },
  { name: "Transistor Radio Piano", kind: "grand", vol: 48 },
  { name: "Yamaha Grand Piano", kind: "grand", vol: 48, pan: -9 },
];

const params: [string, string, string][] = [
  ["クオンタイズ:", "オフ", "y"],
  ["Q-スウィング:", "", ""],
  ["トランスポーズ:", "", "y"],
  ["ファインチューン:", "", "y"],
  ["Flexとフォロー:", "オン", "y"],
  ["ゲイン:", "", ""],
];

const Stereo = () => (
  <svg width="9" height="7" viewBox="0 0 9 7" fill="none" stroke="#e2e2e2"><circle cx="3.300" cy="3.500" r="2.600" /><circle cx="5.700" cy="3.500" r="2.600" /></svg>
);

const Triangle = ({ down }: { down?: boolean }) => (
  <svg width="7" height="7" viewBox="0 0 7 7" fill="#f0f0f0"><path d={down ? "M0 1h7L3.500 6.500z" : "M1 0v7l5.500-3.500z"} /></svg>
);

const Glyph = ({ d, fill, size = 14, color }: { d: string; fill?: boolean; size?: number; color?: string }) => (
  <svg width={size} height={size} viewBox="0 0 14 14" fill={fill ? color ?? "currentColor" : "none"} stroke={fill ? "none" : color ?? "currentColor"} strokeWidth="1" fillRule="evenodd">
    <path d={d} />
  </svg>
);

const Count = styled.span`
  font-size: 7px;
  font-weight: 600;
`;

export default function App() {
  return (
    <Page>
      <Global />
      <ControlBar>
        <BarGroup>
          <BarButton aria-label="Library"><Glyph fill d="M3 2h8l1.500 7v3h-11V9zM4 3.500 3.200 8.500H5l.7 1.500h2.600L9 8.500h1.800L10 3.500zM4.500 4.500h5v1h-5zM4.200 6.500h5.600v1H4.200z" /></BarButton>
          <BarButton $tone="on" aria-label="Inspector"><Info size={14} strokeWidth={2} /></BarButton>
          <BarButton aria-label="Quick help"><Glyph d="M7 1a6 6 0 1 0 .01 0M5 5.500Q5 3.500 7 3.500T9 5.400Q9 6.300 7.700 7 7 7.400 7 8.500M7 9.700v1.100" /></BarButton>
          <BarButton aria-label="Toolbar"><Glyph d="M1.500 2h11v10h-11zM1.500 4h11M5 7l2 2 2-2" /></BarButton>
        </BarGroup>
        <BarGroup $gap={6}>
          <BarButton aria-label="Smart controls"><Glyph d="M7 3.200a3.800 3.800 0 1 0 .01 0M7 7 4.800 9M7 0v1.500M0 7h1.500M12.500 7H14M2 2l1.200 1.200M10.800 10.800 12 12M2 12l1.200-1.200M10.800 3.200 12 2" /></BarButton>
          <BarButton $tone="on" aria-label="Mixer"><Glyph d="M2.500 1v12M7 1v12M11.500 1v12M1 6.500h3M5.500 10h3M10 4h3M1 7.500h3M5.500 11h3M10 5h3" /></BarButton>
          <BarButton aria-label="Editors"><Glyph d="M4.500 1 8.800 9.500M9.500 1 5.200 9.500M4 9.300a1.700 1.700 0 1 0 .01 0M10 9.300a1.700 1.700 0 1 0 .01 0" /></BarButton>
        </BarGroup>
        <Spacer $grow={49} />
        <BarGroup>
          <BarButton $wide aria-label="Rewind"><Glyph fill d="M7 3v8L0 7zM14 3v8L7 7z" /></BarButton>
          <BarButton $wide aria-label="Forward"><Glyph fill d="M0 3v8l7-4zM7 3v8l7-4z" /></BarButton>
          <BarButton $wide aria-label="Stop"><Glyph fill d="M2 2h10v10H2z" /></BarButton>
          <BarButton $wide $tone="play" aria-label="Play"><Glyph fill d="M2.500 2v10L12.500 7z" /></BarButton>
          <BarButton $wide aria-label="Record"><Glyph fill color="#c92b26" d="M7 1.500a5.500 5.500 0 1 0 .01 0" /></BarButton>
          <BarButton $wide aria-label="Cycle"><Glyph d="M5 2.500H8.500Q12 3.500 12 7T9.500 11M9 11.500H5.500Q2 10.500 2 7T4.500 3M6.500.5 4.500 2.500l2 2M7.500 9.500l2 2-2 2" /></BarButton>
        </BarGroup>
        <Lcd>
          <LcdCell $w={96}>
            <LcdBig>01:00:26:13.41</LcdBig>
            <LcdDigits><span><i>00</i>17</span><span>3</span><span>2</span><span><i>0</i>98</span></LcdDigits>
          </LcdCell>
          <LcdCell $w={95}>
            <LcdDigits $muted><span><i>00</i>19</span><span>1</span><span>1</span><span><i>00</i>1</span></LcdDigits>
            <LcdDigits $muted><span><i>00</i>43</span><span>1</span><span>1</span><span><i>00</i>1</span></LcdDigits>
          </LcdCell>
          <LcdCell $w={64}><LcdBig>150.0000</LcdBig><LcdSmall>Auto Tempo</LcdSmall></LcdCell>
          <LcdCell $w={46}><LcdBig>4/4</LcdBig><LcdBig>&nbsp;&nbsp;&nbsp;/16</LcdBig></LcdCell>
          <LcdCell $w={76} $align="flex-start"><LcdSmall>No In</LcdSmall><LcdSmall>No Out</LcdSmall></LcdCell>
          <LcdCell $w={52} $align="flex-start">
            <LoadRow><span>CPU</span><LoadTrack $filled /></LoadRow>
            <LoadRow><span>HD</span><LoadTrack /></LoadRow>
          </LcdCell>
          <LcdCell $w={9}>
            <svg width="7" height="5" viewBox="0 0 7 5" fill="none" stroke="#b8d2ee"><path d="m1 1 2.500 2.500L6 1" /></svg>
          </LcdCell>
        </Lcd>
        <BarGroup>
          <BarButton aria-label="Replace"><Glyph d="M2 2h10v5.500Q12 10 7 12.500 2 10 2 7.500zM5 4.500l4 4M9 4.500l-4 4" /></BarButton>
          <BarButton aria-label="Tuner"><Glyph d="M1 13 5 9M10.500 1 5.500 5.500Q4.500 7 5 9 7 9.500 8.500 8.500L13 3.500" /></BarButton>
          <BarButton aria-label="Solo"><Glyph d="M2 1.500h10v11H2zM8.800 5Q8.500 4 7 4 5.200 4 5.200 5.400 5.200 6.600 7 6.900 8.900 7.200 8.900 8.500 8.900 10 7 10 5.200 10 5 8.900" /></BarButton>
        </BarGroup>
        <BarGroup $gap={6}>
          <BarButton $tone="violet" aria-label="Count-in"><Count>1234</Count></BarButton>
          <BarButton aria-label="Metronome"><Glyph fill color="#6b43a3" d="M5.500 2h3l3.500 10H2zM6 3.500 4.500 8h3L11 2.500l.7.500L8.700 8h.8L8 3.500z" /></BarButton>
        </BarGroup>
        <Spacer $grow={36} />
        <MasterVolume type="range" min={0} max={78} defaultValue={54} aria-label="Master volume" />
        <Spacer $grow={40} />
        <BarGroup>
          <BarButton aria-label="Lists"><List size={14} strokeWidth={1.5} /></BarButton>
          <BarButton aria-label="Notes"><Glyph d="M10 2H1.500v10.500H12V6M1.500 4H8M6 8.500l.5-2L12 1l1.300 1.300L8 8z" /></BarButton>
          <BarButton aria-label="Loops"><Glyph d="M2 12.500h3.500Q2.500 10.500 2.500 6.500 3 2 7 2t4.500 4.500q0 4-3 6H12" /></BarButton>
          <BarButton aria-label="Browser"><Glyph fill d="M0 4h3V2.500h2L6 1h3l1 1.500h2V7h2v5.500h-1.500V9h-2v3.500q0 1.500-1.500 1T9.500 11V8H8v4H0zM7.500 3.500a1.800 1.800 0 1 0 .01 0M1 5.500v1h1v-1zM1 8v1h1V8z" /></BarButton>
        </BarGroup>
      </ControlBar>

      <Body>
        <Inspector>
          <InspectorHead><Triangle down /> リージョン:<b>5個選択中</b></InspectorHead>
          <div>
            <ParamRow><label htmlFor="mute">ミュート:</label><Tick id="mute" type="checkbox" /></ParamRow>
            <ParamRow><label htmlFor="loop">ループ:</label><Tick id="loop" type="checkbox" /></ParamRow>
            <ParamRow><span>-</span><i>-</i></ParamRow>
            {params.map(([label, value, arrows]) => (
              <ParamRow key={label}><span>{label}</span><b>{value}</b>{arrows && <UpDown small />}</ParamRow>
            ))}
            <Disclosure><Triangle /> 詳細</Disclosure>
          </div>
          <InspectorHead $top><Triangle /> トラック:<b>ヴォーカル</b></InspectorHead>
          <InspectorStrips>
            <InspectorStrip>
              <span />
              <Slot $tone="soft" aria-label="Empty setting" />
              <SlotPair $soft $cols="1fr 1fr 1fr">
                <PairCell>48</PairCell>
                <PairCell><svg width="9" height="7" viewBox="0 0 9 7" fill="none" stroke="#999"><path d="M0 6.500 3 1.500h6" /></svg></PairCell>
                <PairCell><svg width="7" height="8" viewBox="0 0 7 8" fill="none" stroke="#999"><circle cx="3.500" cy="4" r="2" /><path d="M3.500 0v8" /></svg></PairCell>
              </SlotPair>
              <GainRow>
                <Readout>12</Readout>
                <svg width="11" height="11" viewBox="0 0 11 11"><circle cx="5.500" cy="5.500" r="3.500" fill="#777" /><path d="M2.500 9.300a4.600 4.600 0 1 1 6 0" fill="none" stroke="#7fb4ee" strokeWidth="1.700" /></svg>
              </GainRow>
              <Slot $tone="soft">ダイレクト</Slot>
              <Slot $tone="dim">設定</Slot>
              <GainMeter />
              <EqView viewBox="0 0 44 19" fill="none"><path d="M3 14q7-3 12-4h15q6 0 11 3" stroke="#4b86c6" strokeWidth="1.500" /><path d="M20 9v3M23 9v4M26 9v2M17 9v2" stroke="#4b86c6" /></EqView>
              <SlotPair $cols="12px 1fr"><PairCell><Stereo /></PairCell><PairCell>In 1-2</PairCell></SlotPair>
              <Inserts>
                {["Channel EQ", "DeEsser 2", "Compressor", "ChromaVerb", "PShft", "SmpleDly", "Exciter", "Limiter"].map((n) => <Insert key={n}>{n}</Insert>)}
              </Inserts>
              <SendRow><Slot $tone="dim">Sends</Slot><i /></SendRow>
              <Slot>Stereo Out</Slot>
              <Slot $tone="dim">Group</Slot>
              <Slot $tone="solid">Read</Slot>
              <Center><Knob /></Center>
              <DbPair><Readout>-8.8</Readout><Readout /></DbPair>
              <FaderBox>
                <FaderUnit value={38} name="ヴォーカル" />
                <SmallKeys><SmallKey $rec>R</SmallKey><SmallKey>I</SmallKey></SmallKeys>
              </FaderBox>
              <MuteRow><MuteKey>M</MuteKey><MuteKey>S</MuteKey></MuteRow>
              <StripName>ヴォーカル</StripName>
            </InspectorStrip>
            <InspectorStrip>
              <span /><span /><span /><span /><span />
              <Slot>Broadcast…</Slot>
              <GainMeter />
              <EqView viewBox="0 0 44 19" fill="none"><path d="M3 10q4 1 8 .500h22q4-.5 8-1" stroke="#4b86c6" strokeWidth="1.300" /></EqView>
              <Slot aria-label="Stereo format"><Stereo /></Slot>
              <Inserts>
                {["Channel EQ", "Multipr", "Exciter", "AdLimit"].map((n) => <Insert key={n}>{n}</Insert>)}
              </Inserts>
              <span /><span />
              <Slot $tone="dim">Group</Slot>
              <Slot $tone="green">Read</Slot>
              <Center><Knob /></Center>
              <DbPair><Readout>-1.2</Readout><Readout $tone="y">-2.0</Readout></DbPair>
              <FaderBox>
                <FaderUnit value={60} name="Broadcast Ready" level={{ top: [4, 4], hot: true }} />
                <SmallKeys><SmallKey>Bnce</SmallKey></SmallKeys>
              </FaderBox>
              <MuteRow><MuteKey>M</MuteKey></MuteRow>
              <StripName>Broadcast Ready</StripName>
            </InspectorStrip>
          </InspectorStrips>
        </Inspector>

        <MainColumn>
          <Arrange>
            <PanelBar>
              <ToolGroup><ToolButton $w={19} aria-label="Up"><UpArrow /></ToolButton></ToolGroup>
              <ToolGroup $gap={6} $w={117}>
                <ToolButton>編集 <Chevron /></ToolButton>
                <ToolButton>機能 <Chevron /></ToolButton>
                <ToolButton>表示 <Chevron /></ToolButton>
              </ToolGroup>
              <ToolGroup $gap={5}>
                <ToolButton $w={20} aria-label="Automation">
                  <svg width="15" height="8" viewBox="0 0 15 8" fill="none" stroke="#ddd"><path d="M0 7h3l5-5h2M12 1h3" strokeDasharray="2 1" /><path d="M4 6h1M9 2h2" strokeWidth="2" /></svg>
                </ToolButton>
                <ToolButton $w={20} $on aria-label="Flex">
                  <svg width="14" height="10" viewBox="0 0 14 10" fill="none" stroke="#d8e6f5"><path d="M1 .5v9M13 .5v9M2 1.500 12 8.500M12 1.500 2 8.500M3 3v4M11 3v4" /></svg>
                </ToolButton>
              </ToolGroup>
              <ToolGroup $gap={4}>
                <ToolButton $w={19} $on aria-label="Catch playhead">
                  <svg width="13" height="9" viewBox="0 0 13 9" fill="none" stroke="#fff"><path d="M1 3l2 2-2 2M12 3l-2 2 2 2M6.500 3v6" /><path d="M4 .5h5L7 3H6z" fill="#fff" /></svg>
                </ToolButton>
              </ToolGroup>
              <Spacer $grow={288} />
              <ToolGroup>
                <ToolButton $w={27} aria-label="Pointer tool"><svg width="6" height="9" viewBox="0 0 6 9" fill="#fff"><path d="M.5 0v7.500L2.300 6l1.100 2.700 1.200-.5L3.500 5.600H6z" /></svg><Chevron /></ToolButton>
                <ToolButton $w={27} aria-label="Marquee tool"><svg width="9" height="9" viewBox="0 0 9 9" stroke="#ccc"><path d="M4.500 0v3.500M4.500 5.500V9M0 4.500h3.500M5.500 4.500H9" /></svg><Chevron /></ToolButton>
              </ToolGroup>
              <Spacer $grow={48} />
              <FieldLabel htmlFor="snap" $gap={0}>スナップ:</FieldLabel>
              <ToolGroup><SelectBox $w={110}><Select id="snap"><option>スマート</option></Select><UpDown /></SelectBox></ToolGroup>
              <FieldLabel htmlFor="drag">ドラッグ:</FieldLabel>
              <ToolGroup><SelectBox $w={89}><Select id="drag"><option>オーバーラップなし</option></Select><UpDown /></SelectBox></ToolGroup>
              <ToolGroup $gap={5}>
                <ToolButton $w={19} aria-label="Waveform zoom"><svg width="13" height="9" viewBox="0 0 13 9" stroke="#ccc"><path d="M0 4.500h13M2.500 3.500v2M4.500 2v5M6.500 0v9M8.500 2v5M10.500 3.500v2M3.500 3v3M5.500 1.500v6M7.500 1.500v6M9.500 3v3" /></svg></ToolButton>
              </ToolGroup>
              <ToolGroup $gap={5}>
                <ToolButton $w={20} aria-label="Fit vertically"><svg width="9" height="9" viewBox="0 0 9 9" fill="none" stroke="#ddd"><path d="M0 .5h9M0 8.500h9M4.500 1v7M3 3l1.500-1.500L6 3M3 6l1.500 1.500L6 6" /></svg></ToolButton>
                <ToolButton $w={20} aria-label="Fit horizontally"><svg width="9" height="9" viewBox="0 0 9 9" fill="none" stroke="#ddd"><path d="M.5 0v9M8.500 0v9M1 4.500h7M3 3 1.500 4.500 3 6M6 3l1.500 1.500L6 6" /></svg></ToolButton>
              </ToolGroup>
              <ToolGroup $gap={5} $w={96}>
                <ToolButton as="label"><svg width="5" height="8" viewBox="0 0 5 8" fill="none" stroke="#aaa"><path d="M2.500 1v6M.5 2.500l2-2 2 2M.5 5.500l2 2 2-2" /></svg><MiniRange type="range" defaultValue={38} aria-label="Vertical zoom" /></ToolButton>
                <ToolButton as="label"><svg width="8" height="5" viewBox="0 0 8 5" fill="none" stroke="#aaa"><path d="M1 2.500h6M2.500.5l-2 2 2 2M5.500.5l2 2-2 2" /></svg><MiniRange type="range" defaultValue={5} aria-label="Horizontal zoom" /></ToolButton>
              </ToolGroup>
            </PanelBar>
            <ArrangeBody>
              <ListHead>
                <HeadButton aria-label="Add track"><Glyph size={8} d="M7 0v14M0 7h14" /></HeadButton>
                <HeadButton aria-label="Duplicate track"><Glyph fill size={12} d="M1 1h9v9H1zM5 3v2H3v1h2v2h1V6h2V5H6V3zM11 4h2v9H4v-2h7z" /></HeadButton>
                <HeadButton>S</HeadButton>
                <Spacer />
                <HeadButton aria-label="Header options"><Glyph size={10} d="M1.500 2h11v10h-11zM1.500 4h11M5 7l2 2 2-2" /></HeadButton>
              </ListHead>
              <Ruler>
                <Numbers>
                  {Array.from({ length: 18 }, (_, i) => <RulerNumber key={i}>{i * 4 + 1}</RulerNumber>)}
                </Numbers>
                <Ticks />
                <Marker style={{ left: 6 + 50 * BAR, width: 8 * BAR }}>マーカー1</Marker>
                <PlayheadCap style={{ left: 184 }} width="9" height="9" viewBox="0 0 9 9" fill="#e2e2e2"><path d="M0 1q0-1 1-1h7q1 0 1 1v4L4.500 9 0 5z" /></PlayheadCap>
              </Ruler>
              <TrackList>
                {tracks.map((t, i) => (
                  <TrackRow key={i}>
                    <TrackNumber>{i + 1}</TrackNumber>
                    <TrackPicture><Picture kind={t.kind} size={28} /></TrackPicture>
                    <TrackInfo>
                      {t.name}
                      <Keys>
                        <KeyGroup><Key>M</Key><Key>S</Key></KeyGroup>
                        {!t.noRec && <KeyGroup><Key>R</Key></KeyGroup>}
                      </Keys>
                    </TrackInfo>
                    <VolumeBox>
                      <VolumeBed>
                        {t.level && <><VolumeLevel $w={t.level} /><VolumeLevel $w={t.level} /></>}
                      </VolumeBed>
                      <Volume type="range" min={0} max={66} defaultValue={t.vol} aria-label={`${t.name} volume`} />
                    </VolumeBox>
                    <PanBox><Knob size={18} pan={t.pan} sides /></PanBox>
                  </TrackRow>
                ))}
              </TrackList>
              <Lanes>
                {lanes.map((lane, i) => (
                  <Lane key={i}>
                    {lane.regions.map((r) => <RegionView key={r.from} region={r} color={lane.color} />)}
                  </Lane>
                ))}
                <Playhead style={{ left: 188 }} />
              </Lanes>
            </ArrangeBody>
          </Arrange>

          <Mixer>
            <PanelBar>
              <ToolGroup><ToolButton $w={19} aria-label="Up"><UpArrow /></ToolButton></ToolGroup>
              <ToolGroup $gap={5} $w={140}>
                <ToolButton>編集 <Chevron /></ToolButton>
                <ToolButton>オプション <Chevron /></ToolButton>
                <ToolButton>表示 <Chevron /></ToolButton>
              </ToolGroup>
              <FieldLabel htmlFor="send">フェーダーのセンド:</FieldLabel>
              <ToolGroup>
                <ToolButton $w={20} aria-label="Sends on faders"><Power size={9} strokeWidth={2} /></ToolButton>
                <SelectBox $w={74}><Select id="send"><option>オフ</option></Select><UpDown /></SelectBox>
              </ToolGroup>
              <Spacer $grow={121} />
              <ToolGroup>
                <ToolButton $w={46}>シングル</ToolButton>
                <ToolButton $w={46} $on>トラック</ToolButton>
                <ToolButton $w={40}>すべて</ToolButton>
              </ToolGroup>
              <Spacer $grow={111} />
              <ToolGroup $w={303}>
                {["Audio", "Inst", "Aux", "Bus", "Input", "Output", "Master/VCA", "MIDI"].map((n) => <ToolButton key={n} $on>{n}</ToolButton>)}
              </ToolGroup>
              <ToolGroup $gap={6}>
                <ToolButton $w={20} $on aria-label="Narrow strips"><svg width="9" height="8" viewBox="0 0 9 8" fill="none" stroke="#fff"><path d="M.5.5h8v7h-8zM3.200.5v7M5.800.5v7" /></svg></ToolButton>
                <ToolButton $w={20} aria-label="Wide strips"><svg width="9" height="8" viewBox="0 0 9 8" fill="none" stroke="#ddd"><path d="M.5.5h8v7h-8zM4.500.5v7" /></svg></ToolButton>
              </ToolGroup>
            </PanelBar>
            <MixerBody>
              <Labels>
                <span />
                <span>Output</span>
                <span>Group</span>
                <span>オートメーション</span>
                <span />
                <span>パン</span>
                <span>dB</span>
                <svg width="20" height="113" viewBox="0 0 20 113" aria-hidden="true">
                  {([["6", 0], ["3", 11], ["0", 21], ["3", 32], ["6", 44], ["10", 51], ["15", 60], ["20", 67], ["30", 74], ["40", 78], ["∞", 85]] as [string, number][]).map(([t, y], i) => (
                    <g key={i}>
                      <ScaleText x="11" y={y + 15}>{t}</ScaleText>
                      <path d={`M13 ${y + 13.500}h7`} stroke="#a5a5a5" />
                    </g>
                  ))}
                  {minors.map((y) => <path key={y} d={`M17 ${y + 13.500}h3`} stroke="#858585" strokeWidth=".7" />)}
                </svg>
              </Labels>
              <Strips>
                {channels.map((c, i) => <ChannelStrip key={i} c={c} />)}
              </Strips>
              <Signature>Bawm</Signature>
            </MixerBody>
          </Mixer>
        </MainColumn>
      </Body>
    </Page>
  );
}
